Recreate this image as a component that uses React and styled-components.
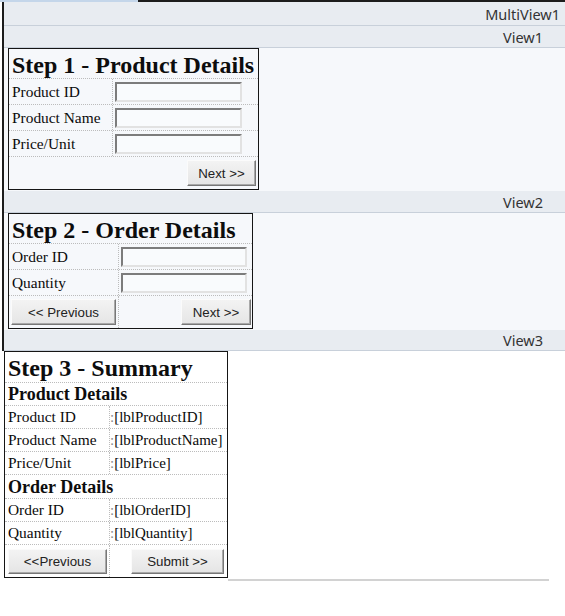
import React from "react";
import styled, { createGlobalStyle } from "styled-components";

const Global = createGlobalStyle`
  *, *::before, *::after { box-sizing: border-box; }
  html, body { margin: 0; padding: 0; background: #ffffff; }
  body { font-family: "Liberation Serif", "Times New Roman", serif; color: #111; }
`;

const Page = styled.div`
  width: 565px;
  height: 616px;
  overflow: hidden;
`;

const Frame = styled.div`
  position: relative;
  margin-left: 2px;
  border-left: 2px solid #1c1c1c;
  border-top: 2px solid #1c1c1c;
`;

const SelectTab = styled.div`
  position: absolute;
  top: -2px;
  left: -4px;
  width: 138px;
  height: 2px;
  background: #c4d6ea;
`;

const Band = styled.div`
  display: flex;
  align-items: center;
  justify-content: flex-end;
  height: ${(p) => p.$h}px;
  padding-right: ${(p) => p.$pr}px;
  background: #e8ecf1;
  border-bottom: 1px solid #c8d0da;
  font-family: "Noto Sans", "Open Sans", sans-serif;
  font-size: 14.5px;
  color: #333;
`;

const ViewBody = styled.div`
  background: #f6f8fb;
  padding: 0 0 1px 4px;
`;

const OuterView = styled.div`
  display: flex;
  align-items: flex-end;
  padding-left: 4px;
`;

const Rule = styled.div`
  width: 321px;
  height: 2px;
  margin-bottom: -3px;
  background: #d2d2d2;
`;

const Card = styled.div`
  width: ${(p) => p.$w}px;
  border: 1px solid #151515;
  background: ${(p) => p.$bg || "transparent"};
`;

const TitleRow = styled.div`
  display: flex;
  align-items: center;
  height: ${(p) => p.$h}px;
  padding: ${(p) => p.$pt || 0}px 0 0 3px;
  border-bottom: 1px dotted #bcbcbc;
  font-family: "Liberation Serif", "Times New Roman", serif;
  font-weight: bold;
  font-size: ${(p) => p.$size}px;
  color: #0d0d0d;
  white-space: nowrap;
`;

const Row = styled.div`
  display: grid;
  grid-template-columns: ${(p) => (p.$label ? `${p.$label}px 1fr` : "1fr")};
  height: ${(p) => p.$h}px;
  border-bottom: 1px dotted #bcbcbc;
  &:last-child {
    border-bottom: none;
  }
`;

const Cell = styled.div`
  display: flex;
  align-items: center;
  justify-content: ${(p) => (p.$end ? "flex-end" : "flex-start")};
  padding: 0 ${(p) => p.$pr ?? 2}px 0 ${(p) => p.$pl ?? 3}px;
  font-size: ${(p) => p.$fs || 15.4}px;
  color: #0a0a0a;
  white-space: nowrap;
  & + & {
    border-left: 1px dotted #bcbcbc;
  }
`;

const Colon = styled.span`
  color: #8a8a8a;
`;

const TextBox = styled.input`
  width: ${(p) => p.$w}px;
  height: 20px;
  padding: 0;
  border: 2px solid;
  border-color: #7c7c7c #e2e2e2 #e2e2e2 #7c7c7c;
  background: #f9fbfd;
`;

const Button = styled.button`
  width: ${(p) => p.$w}px;
  height: ${(p) => p.$h || 26}px;
  padding: 0;
  font-family: "Liberation Sans", Arial, sans-serif;
  font-size: 13.3px;
  color: #222;
  background: linear-gradient(#f3f3f3, #e5e5e5);
  border: 1px solid;
  border-color: #fbfbfb #777777 #777777 #fbfbfb;
  box-shadow: inset -1px -1px 0 #a9a9a9;
`;

const FieldRow = ({ label, labelW, inputW }) => (
  <Row $label={labelW} $h={26}>
    <Cell>{label}</Cell>
    <Cell $pl={2}>
      <TextBox $w={inputW} />
    </Cell>
  </Row>
);

const InfoRow = ({ label, value }) => (
  <Row $label={104} $h={23}>
    <Cell>{label}</Cell>
    <Cell $pl={0} $fs={15}>
      <Colon>:</Colon>
      {value}
    </Cell>
  </Row>
);

export default function App() {
  return (
    <Page>
      <Global />
      <Frame>
        <SelectTab />
        <Band $h={24} $pr={5}>MultiView1</Band>

        <Band $h={22} $pr={22}>View1</Band>
        <ViewBody>
          <Card $w={251}>
            <TitleRow $h={30} $pt={3} $size={24}>Step 1 - Product Details</TitleRow>
            <FieldRow label="Product ID" labelW={103} inputW={127} />
            <FieldRow label="Product Name" labelW={103} inputW={127} />
            <FieldRow label="Price/Unit" labelW={103} inputW={127} />
            <Row $h={32}>
              <Cell $end $pr={2}>
                <Button $w={69}>Next &gt;&gt;</Button>
              </Cell>
            </Row>
          </Card>
        </ViewBody>

        <Band $h={22} $pr={22}>View2</Band>
        <ViewBody>
          <Card $w={245}>
            <TitleRow $h={30} $pt={3} $size={24}>Step 2 - Order Details</TitleRow>
            <FieldRow label="Order ID" labelW={109} inputW={126} />
            <FieldRow label="Quantity" labelW={109} inputW={126} />
            <Row $label={109} $h={32}>
              <Cell $pl={2}>
                <Button $w={106}>&lt;&lt; Previous</Button>
              </Cell>
              <Cell $end $pr={1}>
                <Button $w={70}>Next &gt;&gt;</Button>
              </Cell>
            </Row>
          </Card>
        </ViewBody>

        <Band $h={21} $pr={22}>View3</Band>
      </Frame>

      <OuterView>
        <Card $w={224} $bg="#ffffff">
          <TitleRow $h={31} $pt={2} $size={24}>Step 3 - Summary</TitleRow>
          <TitleRow $h={23} $pt={1} $size={18}>Product Details</TitleRow>
          <InfoRow label="Product ID" value="[lblProductID]" />
          <InfoRow label="Product Name" value="[lblProductName]" />
          <InfoRow label="Price/Unit" value="[lblPrice]" />
          <TitleRow $h={24} $pt={1} $size={18}>Order Details</TitleRow>
          <InfoRow label="Order ID" value="[lblOrderID]" />
          <InfoRow label="Quantity" value="[lblQuantity]" />
          <Row $label={104} $h={32}>
            <Cell>
              <Button $w={99} $h={25}>&lt;&lt;Previous</Button>
            </Cell>
            <Cell $end $pr={3}>
              <Button $w={93} $h={25}>Submit &gt;&gt;</Button>
            </Cell>
          </Row>
        </Card>
        <Rule />
      </OuterView>
    </Page>
  );
}
